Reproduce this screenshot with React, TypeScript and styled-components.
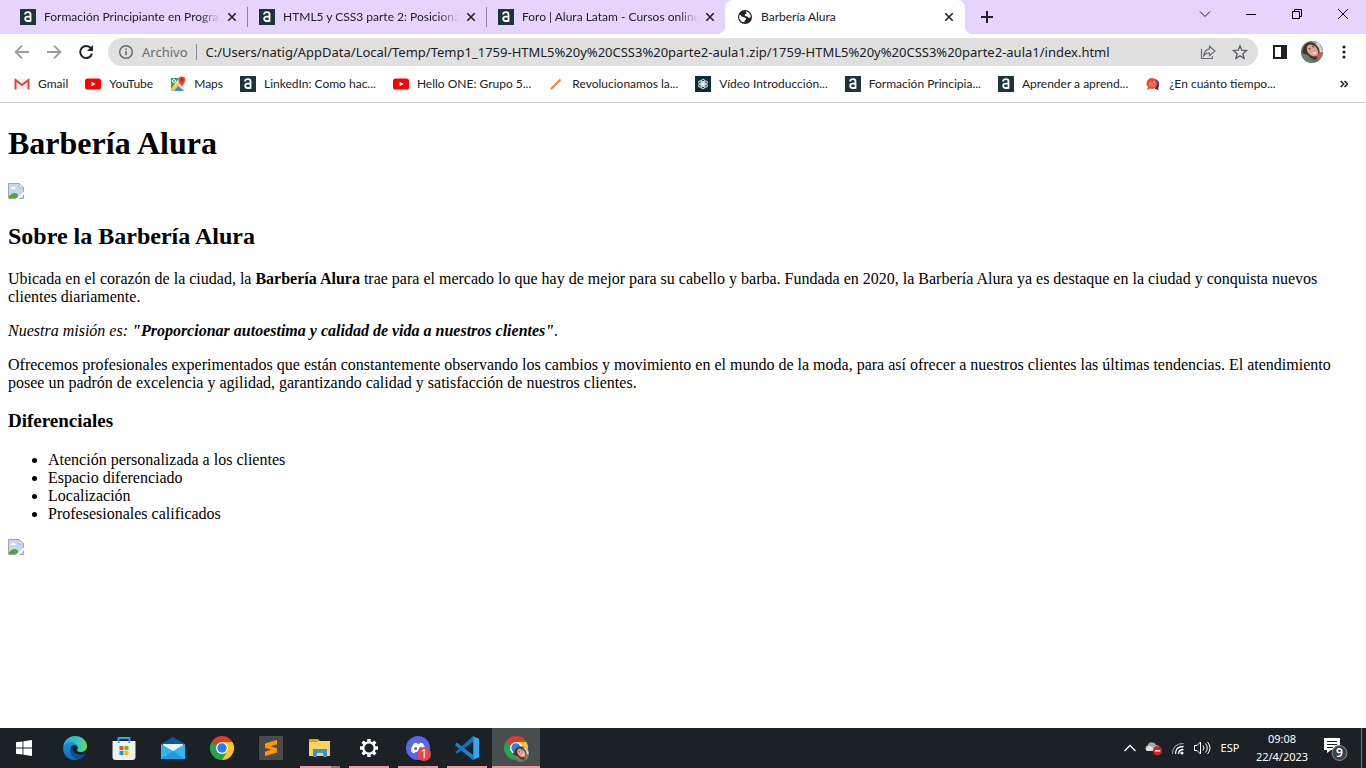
import React from 'react';
import styled, { createGlobalStyle } from 'styled-components';

const uiFont = 'Lato, "Open Sans", sans-serif';
const addressFont = '"Noto Sans", "Open Sans", sans-serif';

const GlobalStyle = createGlobalStyle`
  * { box-sizing: border-box; }
  body { margin: 0; background: #fff; }
  button, input { font: inherit; color: inherit; border: 0; padding: 0; margin: 0; background: none; }
  svg { flex: none; }
`;

const Window = styled.div`
  display: flex;
  flex-direction: column;
  min-height: 100vh;
  background: #fff;
`;

const Chrome = styled.header`
  font-family: ${uiFont};
  color: #202124;
  border-bottom: 1px solid #c9c9c9;
`;

const TabStrip = styled.div`
  display: flex;
  height: 34px;
  padding-left: 8px;
  background: #e7d4fc;
`;

const Tab = styled.div<{ $active?: boolean }>`
  position: relative;
  display: flex;
  align-items: center;
  flex: 0 1 ${p => (p.$active ? 240 : 239)}px;
  min-width: 0;
  padding: 0 ${p => (p.$active ? 8 : 7)}px 0 12px;
  gap: 8px;
  border-radius: 8px 8px 0 0;
  background: ${p => (p.$active ? '#fff' : 'transparent')};

  &::before, &::after {
    content: '';
    position: absolute;
    bottom: 0;
    width: 8px;
    height: 8px;
    display: ${p => (p.$active ? 'block' : 'none')};
  }
  &::before { left: -8px; background: radial-gradient(circle at 0 0, transparent 8px, #fff 8px); }
  &::after { right: -8px; background: radial-gradient(circle at 100% 0, transparent 8px, #fff 8px); }

  button { margin-left: -4px; }
`;

const TabTitle = styled.span<{ $fade?: boolean }>`
  flex: 1;
  overflow: hidden;
  white-space: nowrap;
  font-size: 12px;
  line-height: 16px;
  ${p => p.$fade && 'mask-image: linear-gradient(to right, #000 calc(100% - 20px), transparent);'}
`;

const TabDivider = styled.span`
  width: 1px;
  height: 20px;
  align-self: center;
  margin-right: -1px;
  background: #8d8399;
`;

const IconButton = styled.button<{ $size?: number }>`
  display: flex;
  align-items: center;
  justify-content: center;
  flex: none;
  width: ${p => p.$size ?? 16}px;
  height: ${p => p.$size ?? 16}px;
`;

const NewTab = styled(IconButton)`
  margin: 3px 0 0 8px;
`;

const WindowControls = styled.div`
  display: flex;
  margin-left: auto;
`;

const WindowButton = styled.button`
  display: flex;
  align-items: center;
  justify-content: center;
  width: 46px;
  height: 28px;
`;

const Toolbar = styled.div`
  display: flex;
  align-items: center;
  height: 36px;
  padding: 0 8px;
  gap: 4px;
`;

const AddressBar = styled.div`
  display: flex;
  align-items: center;
  flex: 1;
  height: 28px;
  margin: 0 4px;
  padding: 0 10px;
  gap: 16px;
  border-radius: 14px;
  background: #e0e0e0;
  font-family: ${addressFont};
  font-size: 13px;
`;

const SiteInfo = styled.button`
  display: flex;
  align-items: center;
  gap: 8px;
  height: 16px;
  padding-right: 8px;
  border-right: 1px solid #8b8b8b;
  color: #6a6d71;
`;

const Address = styled.input`
  flex: 1;
  min-width: 0;
  margin-left: -7px;
  outline: none;
`;

const Bookmarks = styled.nav`
  display: flex;
  height: 32px;
  padding: 0 14px 4px;
  align-items: center;
`;

const Bookmark = styled.a`
  display: flex;
  align-items: center;
  gap: 8px;
  flex: none;
  padding-right: 17px;
  color: #202124;
  text-decoration: none;
  white-space: nowrap;
  font-size: 12px;
  line-height: 16px;
`;

const Overflow = styled(IconButton)`
  margin-left: auto;
`;

const Page = styled.main`
  flex: 1;
  padding: 0 8px;
  color: #000;
  font: 16px "Liberation Serif", "Times New Roman", serif;

  h1 { margin: 22px 0 21px; font-size: 32px; }
  h2 { margin: 20px 0; font-size: 24px; }
  h3 { margin: 18px 0 19px; font-size: 19px; }
  p, ul { margin: 16px 0; }
  ul { padding-left: 40px; }
`;

const Taskbar = styled.footer`
  display: flex;
  height: 40px;
  background: #1b2125;
  color: #fff;
  font-family: ${addressFont};
  font-size: 11px;
  line-height: 18px;
`;

const StartButton = styled.button`
  display: flex;
  align-items: center;
  justify-content: center;
  width: 48px;
  margin-right: 3px;
`;

const Apps = styled.div`
  display: flex;
  gap: 1px;
`;

const AppButton = styled.button<{ $running?: boolean; $active?: boolean; $stacked?: boolean }>`
  display: flex;
  flex-direction: column;
  align-items: center;
  width: 48px;
  padding-top: 8px;
  background: ${p => (p.$active ? '#484d50' : 'transparent')};

  &::after {
    content: '';
    width: ${p => (p.$active ? 48 : 40)}px;
    height: 2px;
    margin-top: auto;
    background: ${p =>
      p.$stacked
        ? 'linear-gradient(to right, #f8969f 31px, #a86f76 31px)'
        : p.$running ? '#f8969f' : 'transparent'};
  }
`;

const Tray = styled.div`
  display: flex;
  align-items: center;
  margin-left: auto;
  gap: 8px;
`;

const TrayText = styled.button<{ $wide?: boolean }>`
  width: ${p => (p.$wide ? '64px' : '24px')};
  text-align: center;
  white-space: nowrap;
`;

const TrayEnd = styled.div`
  display: flex;
  align-items: center;
  align-self: stretch;
  gap: 11px;
`;

const ShowDesktop = styled.button`
  align-self: stretch;
  width: 5px;
  border-left: 1px solid #777b7e;
`;

const Alura = () => (
  <svg width="16" height="16" viewBox="0 0 16 16" aria-hidden="true">
    <rect width="16" height="16" fill="#1d343d" />
    <path d="M5.200 5.400V4.600Q5.600 3.200 8 3.200 10.500 3.200 10.500 5.500V12.800" fill="none" stroke="#fff" strokeWidth="1.800" />
    <path d="M10.500 7.600H7.600Q5.200 7.600 5.200 9.800T7.600 12H10.500" fill="none" stroke="#fff" strokeWidth="1.800" />
  </svg>
);

const Globe = () => (
  <svg width="16" height="16" viewBox="0 0 16 16" aria-hidden="true">
    <circle cx="8" cy="8" r="7" fill="#202124" />
    <path d="M3 5.500Q4.500 8 7 8.200q2.200.2 2.200 2.300-1.800.3-1.800 2.700Q3.500 13 2.300 9.500 1.900 7 3 5.500z" fill="#fff" />
    <path d="M8.800 2.300q3.400.5 4.600 3.700l.3 2.200-1.900.8-1.600-1.500-2.200-.6-.3-1.600 1.800-.9z" fill="#fff" />
  </svg>
);

const Close = () => (
  <svg width="16" height="16" viewBox="0 0 16 16" aria-hidden="true">
    <path d="m4.300 4.300 7.400 7.400m0-7.400-7.400 7.400" stroke="#202124" strokeWidth="1.600" />
  </svg>
);

const Arrow = ({ flip = false }: { flip?: boolean }) => (
  <svg width="16" height="16" viewBox="0 0 16 16" aria-hidden="true">
    <path d={flip ? 'M1 8h13.200M8 1.600 14.400 8 8 14.400' : 'M15 8H1.800M8 1.600 1.600 8 8 14.400'} fill="none" stroke="#9a9c9f" strokeWidth="1.800" />
  </svg>
);

const Reload = () => (
  <svg width="16" height="16" viewBox="0 0 16 16" aria-hidden="true">
    <path d="M13 4.400A6 6 0 1 0 14 9.500" fill="none" stroke="#202124" strokeWidth="2" />
    <path d="M15 1v6H9z" fill="#202124" />
  </svg>
);

const Info = () => (
  <svg width="16" height="16" viewBox="0 0 16 16" aria-hidden="true">
    <circle cx="8" cy="8" r="6.300" fill="none" stroke="#5f6368" strokeWidth="1.400" />
    <path d="M8 7v4.300M8 4.400V6" stroke="#5f6368" strokeWidth="1.500" />
  </svg>
);

const Share = () => (
  <svg width="16" height="16" viewBox="0 0 16 16" aria-hidden="true" fill="none" stroke="#6a6d71" strokeWidth="1.200">
    <path d="M1.500 5v9.500h11V12" />
    <path d="M9.500 2.200 15 7l-5.500 4.600V8.900Q6 8.800 3.800 11.600 4.500 5.800 9.500 4.900Z" />
  </svg>
);

const Star = () => (
  <svg width="16" height="16" viewBox="0 0 16 16" aria-hidden="true">
    <path d="m8 1.900 1.800 4.300 4.700.4-3.600 3.100 1.100 4.600L8 11.900l-4 2.400 1.100-4.600-3.600-3.100 4.700-.4Z" fill="none" stroke="#5f6368" strokeWidth="1.400" />
  </svg>
);

const SidePanel = () => (
  <svg width="14" height="14" viewBox="0 0 14 14" aria-hidden="true">
    <path d="M0 0h14v14H0zM2 2v10h6V2z" fill="#202124" fillRule="evenodd" />
  </svg>
);

const Portrait = ({ size = 22 }: { size?: number }) => (
  <svg width={size} height={size} viewBox="0 0 22 22" aria-hidden="true">
    <defs>
      <clipPath id={`face${size}`}><circle cx="11" cy="11" r="11" /></clipPath>
    </defs>
    <g clipPath={`url(#face${size})`}>
      <path d="M0 0h22v22H0z" fill="#5d7065" />
      <path d="M10 0h12v10l-5-3z" fill="#8fa79b" />
      <path d="M15 2h3l4 9-3 1z" fill="#dfd8d2" />
      <path d="M3 5Q7 0 13 2l5 5 1 8-5 4-8-4-5-3z" fill="#4a302b" />
      <ellipse cx="11.500" cy="9.500" rx="4.800" ry="6.800" transform="rotate(-42 11.500 9.500)" fill="#dba48c" />
      <path d="m7.500 7.500 2 .5m1.500-3 2 1.500" stroke="#5b3530" />
      <path d="m11.500 12.500 3.500-2-.6 2.600z" fill="#fff" />
      <path d="m1 12 6 2 6 7-6 2-6-5z" fill="#687c70" />
      <path d="m15 15 4-4 3 2-4 7z" fill="#b2675c" />
    </g>
  </svg>
);

const Gmail = () => (
  <svg width="16" height="16" viewBox="0 0 16 16" aria-hidden="true">
    <path d="M1 3h14v10.500H1z" fill="#f1f1f1" />
    <path d="M1.500 13.500V4L8 9l6.500-5v9.500" fill="none" stroke="#db4437" strokeWidth="1.900" />
  </svg>
);

const YouTube = () => (
  <svg width="16" height="16" viewBox="0 0 16 16" aria-hidden="true">
    <rect y="2.500" width="16" height="11" rx="2.600" fill="#f00" />
    <path d="m6.500 5.700 4.200 2.300-4.200 2.300z" fill="#fff" />
  </svg>
);

const Maps = () => (
  <svg width="16" height="16" viewBox="0 0 16 16" aria-hidden="true">
    <rect x="1" y="2" width="13" height="13" rx="1" fill="#e1e1df" />
    <path d="M1 2h8L1 13z" fill="#34a064" />
    <path d="M1 13 11 4l2 2-9 9H1z" fill="#fbc83d" />
    <path d="m4 15 4-5 6 5z" fill="#4285f4" />
    <circle cx="4" cy="5" r="1.500" fill="none" stroke="#fff" />
    <path d="M8.500 4a3.400 3.400 0 0 1 6.800 0c0 2.500-2.400 3.500-3.400 7-1-3.500-3.400-4.500-3.400-7z" fill="#e34133" />
    <circle cx="11.900" cy="4" r="1.200" fill="#842b25" />
  </svg>
);

const Pencil = () => (
  <svg width="16" height="16" viewBox="0 0 16 16" aria-hidden="true">
    <path d="m3 13 9.500-9.500" stroke="#f47b36" strokeWidth="1.900" />
  </svg>
);

const Atom = () => (
  <svg width="16" height="16" viewBox="0 0 16 16" aria-hidden="true">
    <path d="M0 0h16v16H0z" fill="#082e38" />
    <g fill="none" stroke="#c7d5d7" strokeWidth="1.100">
      <ellipse cx="8" cy="8" rx="4.800" ry="2" transform="rotate(30 8 8)" />
      <ellipse cx="8" cy="8" rx="4.800" ry="2" transform="rotate(90 8 8)" />
      <ellipse cx="8" cy="8" rx="4.800" ry="2" transform="rotate(150 8 8)" />
    </g>
    <circle cx="8" cy="8" r="1.700" fill="#fff" />
  </svg>
);

const Speech = () => (
  <svg width="16" height="16" viewBox="0 0 16 16" aria-hidden="true">
    <path d="M10 3q4 1 4 5 0 3-1 4l1 2-4-1z" fill="#27336c" />
    <path d="M7 2a5.500 5.500 0 1 1-2 10.600L2 14l1-3Q1 9 1.500 6.500 3 2 7 2z" fill="#e94b35" />
    <path d="m4.500 9 1-3 1.500 3L9 5l1 4M4 10h6" fill="none" stroke="#f49a83" strokeWidth=".8" />
  </svg>
);

const BrokenImage = ({ label }: { label: string }) => (
  <svg width="16" height="16" viewBox="0 0 16 16" role="img" aria-label={label}>
    <path d="M.5.500h10.500l4.500 4.500v10.500H.5z" fill="#fff" stroke="#a4a4a4" />
    <path d="M1 1h9.500v4.500H15V15H1z" fill="#c5d7f4" />
    <path d="M11 .5v4.500h4.500z" fill="#fff" stroke="#a4a4a4" />
    <path d="M2.500 6q0-1.500 1.500-1.500Q5 2.500 6.500 4.500 8 4.500 8 6z" fill="#fff" />
    <path d="M1 15v-2Q5.500 8 9.500 11l1.500 4z" fill="#4ea833" />
    <path d="m7.500 16 8.500-7.500v2.700L11 16z" fill="#fff" />
  </svg>
);

const WindowsLogo = () => (
  <svg width="16" height="16" viewBox="0 0 16 16" aria-hidden="true">
    <path d="m0 2.300 6.500-.9v6.100H0zM7.400 1.200 16 0v7.500H7.400zM0 8.400h6.500v6.200l-6.500-.9zM7.400 8.400H16V16l-8.600-1.200z" fill="#fff" />
  </svg>
);

const Edge = () => (
  <svg width="24" height="24" viewBox="0 0 24 24" aria-hidden="true">
    <defs>
      <linearGradient id="edgeTop" x1="0" x2="1"><stop stopColor="#27a7e5" /><stop offset=".6" stopColor="#31c5c6" /><stop offset="1" stopColor="#6bdd59" /></linearGradient>
      <linearGradient id="edgeLow" x2="0" y2="1"><stop stopColor="#1794dc" /><stop offset="1" stopColor="#1266b8" /></linearGradient>
    </defs>
    <path d="M.3 10.500C1 4.500 5.700 0 12 0c7 0 12 5 12 10 0 4-3 6-6.500 6-3 0-4-1.200-3.300-2.200 1.600-2.200.3-5.800-4.200-5.800C6 8 1.500 9.700.3 10.500z" fill="url(#edgeTop)" />
    <path d="M.1 12C.5 8 4.500 6 8 6c4.500 0 7 3 6.600 6-.4-2-2-3-3.600-3-3 0-4 3.500-3 7 1 4 4.500 7 7.500 7.500C6 26 0 19 .1 12z" fill="url(#edgeLow)" />
    <path d="M9 11c-3 4-.5 12 6.500 12.500 3-.8 5.500-2.600 7-5.200.3-.5-.2-.8-.7-.5C17 20 9.500 18 9 11z" fill="#124d8d" />
  </svg>
);

const Store = () => (
  <svg width="24" height="24" viewBox="0 0 24 24" aria-hidden="true">
    <path d="M6.500 7V2h11v5" fill="none" stroke="#29a9ea" strokeWidth="1.800" />
    <path d="M.5 5h23v16a3 3 0 0 1-3 3h-17a3 3 0 0 1-3-3z" fill="#f0f0f0" />
    <path d="M6 5h1.500v2H6zm10.500 0h1.500v2h-1.500z" fill="#219ddd" />
    <path d="M7.500 10h4v4h-4z" fill="#f25022" /><path d="M12.500 10h4v4h-4z" fill="#7fba00" />
    <path d="M7.500 15h4v4h-4z" fill="#00a4ef" /><path d="M12.500 15h4v4h-4z" fill="#ffb900" />
  </svg>
);

const Mail = () => (
  <svg width="24" height="24" viewBox="0 0 24 24" aria-hidden="true">
    <path d="m0 8 12-7 12 7v8H0z" fill="#075aa7" />
    <path d="M2 8h20v6l-10 2L2 14z" fill="#f2f2f2" />
    <path d="m0 8 12 7 12-7v15H0z" fill="#32b4ed" />
    <path d="m12 15 12 8H0z" fill="#1f9ae2" />
  </svg>
);

const ChromeMark = () => (
  <>
    <path d="M12 12 1.600 6A12 12 0 0 1 22.400 6z" fill="#e6392e" />
    <path d="M12 12 1.600 6A12 12 0 0 0 12 24l5.200-9z" fill="#27a44b" />
    <path d="M12 6h10.400A12 12 0 0 1 12 24l5.200-9z" fill="#fdc921" />
    <circle cx="12" cy="12" r="6" fill="#fff" />
    <circle cx="12" cy="12" r="4.700" fill="#327bea" />
  </>
);

const ChromeIcon = () => <svg width="24" height="24" viewBox="0 0 24 24" aria-hidden="true"><ChromeMark /></svg>;

const Sublime = () => (
  <svg width="24" height="24" viewBox="0 0 24 24" aria-hidden="true">
    <rect width="24" height="24" rx="1" fill="#4b4b4b" />
    <path d="M18 4v4.200l-6.300 2 6.300 2v4.300L6 20v-4.200l6.300-2-6.300-2V7.500z" fill="#ff9800" />
  </svg>
);

const Folder = () => (
  <svg width="24" height="24" viewBox="0 0 24 24" aria-hidden="true">
    <path d="M1 3h9l2 2h10v15H1z" fill="#e3a007" />
    <path d="M1 6h8l2-1h11v15H1z" fill="#ffd35b" />
    <path d="M5 13h14v8h-4v-4H9v4H5z" fill="#3c91d1" />
  </svg>
);

const Gear = () => (
  <svg width="24" height="24" viewBox="0 0 24 24" aria-hidden="true">
    <circle cx="12" cy="12" r="5.700" fill="none" stroke="#fff" strokeWidth="2.200" />
    {[0, 45, 90, 135, 180, 225, 270, 315].map(a => (
      <path key={a} d="M10.300 6V3h3.400v3z" fill="#fff" transform={`rotate(${a} 12 12)`} />
    ))}
  </svg>
);

const Discord = () => (
  <svg width="26" height="26" viewBox="0 0 26 26" aria-hidden="true">
    <circle cx="13" cy="12" r="12" fill="#5865f2" />
    <path d="m8.500 7.500 3-.9.700 1.100h2.300l.7-1.100 3 .9q2.400 4 2.300 8-1.700 1.500-3.500 1.800l-1-1.500H10.500l-1 1.500Q7.500 17 6 15.500q0-4 2.500-8z" fill="#fff" />
    <circle cx="10.600" cy="12.400" r="1.500" fill="#5865f2" /><circle cx="15.600" cy="12.400" r="1.500" fill="#5865f2" />
    <circle cx="19" cy="18" r="7" fill="#e94649" />
    <text x="19" y="22" textAnchor="middle" fill="#fff" fontSize="12">1</text>
  </svg>
);

const VSCode = () => (
  <svg width="24" height="24" viewBox="0 0 24 24" aria-hidden="true">
    <path d="m.4 8 1.500-1.300 16.600 12.500L18 24 .4 9.400z" fill="#1784ca" />
    <path d="M.4 16 18 0l.5 5.500L2 17.400z" fill="#0b75bd" />
    <path d="m17.500 0 6.500 2.800v18.400L17.500 24q.8-.3.800-1.500v-21Q18.300.3 17.500 0z" fill="#30a9f2" />
  </svg>
);

const ChromeProfile = () => (
  <svg width="26" height="26" viewBox="-1 0 26 26" aria-hidden="true">
    <ChromeMark />
    <svg x="9" y="10" width="16" height="16"><Portrait size={16} /></svg>
  </svg>
);

const CloudOff = () => (
  <svg width="18" height="16" viewBox="0 0 18 16" aria-hidden="true">
    <path d="M2 11a3 3 0 0 1 .5-5.500Q4 1.500 8 2.500q2 .4 3 2.500 3 .1 4 3v3z" fill="#a5a7a9" />
    <path d="M1 9q1-4 5-3l5 5H3q-2 0-2-2z" fill="#e1e1e1" />
    <circle cx="12.500" cy="10.800" r="4.600" fill="#d81d28" />
    <path d="M9.800 10.800h5.400" stroke="#fff" strokeWidth="1.400" />
  </svg>
);

const Wifi = () => (
  <svg width="16" height="16" viewBox="0 0 16 16" aria-hidden="true" fill="none" stroke="#fff">
    <path d="M2.500 14Q2.500 3.500 13.500 3.500" stroke="#afb1b2" />
    <path d="M5.500 14q0-7.500 8-7.500M8.500 14q0-4.500 5-4.500" strokeWidth="1.300" />
    <circle cx="12" cy="13" r="1.600" fill="#fff" stroke="none" />
  </svg>
);

const Speaker = () => (
  <svg width="18" height="16" viewBox="0 0 18 16" aria-hidden="true" fill="none" stroke="#fff">
    <path d="M1.500 5.500H4L7.500 2v12L4 10.500H1.500zM10 5.500q2 2.500 0 5M12.500 3.500q3.500 4.500 0 9M14.500 2q5 6 0 12" />
  </svg>
);

const Notifications = () => (
  <svg width="26" height="26" viewBox="0 0 26 26" aria-hidden="true">
    <path d="M1 3h16v12H8l-4 3v-3H1z" fill="#fff" />
    <path d="M4 6.500h10M4 9.500h10M4 12.500h6" stroke="#1b2125" />
    <circle cx="16.500" cy="18" r="7.500" fill="#3d4245" stroke="#85898b" />
    <text x="16.500" y="22" textAnchor="middle" fill="#fff" fontSize="12" fontWeight="600">9</text>
  </svg>
);

const tabs = [
  { title: 'Formación Principiante en Programación', divider: true },
  { title: 'HTML5 y CSS3 parte 2: Posicionamiento', divider: true },
  { title: 'Foro | Alura Latam - Cursos online de', divider: false },
];

const bookmarks = [
  { label: 'Gmail', icon: <Gmail /> },
  { label: 'YouTube', icon: <YouTube /> },
  { label: 'Maps', icon: <Maps /> },
  { label: 'LinkedIn: Como hac...', icon: <Alura /> },
  { label: 'Hello ONE: Grupo 5...', icon: <YouTube /> },
  { label: 'Revolucionamos la...', icon: <Pencil /> },
  { label: 'Vídeo Introducción...', icon: <Atom /> },
  { label: 'Formación Principia...', icon: <Alura /> },
  { label: 'Aprender a aprend...', icon: <Alura /> },
  { label: '¿En cuánto tiempo...', icon: <Speech /> },
];

const apps = [
  { name: 'Edge', icon: <Edge /> },
  { name: 'Store', icon: <Store /> },
  { name: 'Correo', icon: <Mail /> },
  { name: 'Chrome', icon: <ChromeIcon /> },
  { name: 'Sublime Text', icon: <Sublime /> },
  { name: 'Explorador', icon: <Folder />, running: true, stacked: true },
  { name: 'Configuración', icon: <Gear />, running: true },
  { name: 'Discord', icon: <Discord />, running: true },
  { name: 'Visual Studio Code', icon: <VSCode />, running: true },
  { name: 'Chrome, Barbería Alura', icon: <ChromeProfile />, running: true, active: true },
];

export default function App() {
  return (
    <Window>
      <GlobalStyle />
      <Chrome>
        <TabStrip>
          {tabs.map(tab => (
            <React.Fragment key={tab.title}>
              <Tab>
                <Alura />
                <TabTitle $fade>{tab.title}</TabTitle>
                <IconButton aria-label="Cerrar"><Close /></IconButton>
              </Tab>
              {tab.divider && <TabDivider />}
            </React.Fragment>
          ))}
          <Tab $active>
            <Globe />
            <TabTitle>Barbería Alura</TabTitle>
            <IconButton aria-label="Cerrar"><Close /></IconButton>
          </Tab>
          <NewTab $size={28} aria-label="Nueva pestaña">
            <svg width="14" height="14" viewBox="0 0 14 14"><path d="M7 1v12M1 7h12" stroke="#202124" strokeWidth="2" /></svg>
          </NewTab>
          <WindowControls>
            <WindowButton aria-label="Buscar pestañas">
              <svg width="12" height="12" viewBox="0 0 12 12"><path d="m1 3.500 5 5 5-5" fill="none" stroke="#202124" /></svg>
            </WindowButton>
            <WindowButton aria-label="Minimizar">
              <svg width="10" height="10" viewBox="0 0 10 10"><path d="M0 5.500h10" stroke="#000" /></svg>
            </WindowButton>
            <WindowButton aria-label="Restaurar">
              <svg width="10" height="10" viewBox="0 0 10 10"><path d="M.5 2.500h7v7h-7zM2.500 2.500v-2h7v7h-2" fill="none" stroke="#000" /></svg>
            </WindowButton>
            <WindowButton aria-label="Cerrar ventana">
              <svg width="10" height="10" viewBox="0 0 10 10"><path d="m0 0 10 10M10 0 0 10" stroke="#000" /></svg>
            </WindowButton>
          </WindowControls>
        </TabStrip>

        <Toolbar>
          <IconButton $size={28} aria-label="Atrás"><Arrow /></IconButton>
          <IconButton $size={28} aria-label="Adelante"><Arrow flip /></IconButton>
          <IconButton $size={28} aria-label="Recargar"><Reload /></IconButton>
          <AddressBar>
            <SiteInfo><Info />Archivo</SiteInfo>
            <Address
              aria-label="Dirección"
              defaultValue="C:/Users/natig/AppData/Local/Temp/Temp1_1759-HTML5%20y%20CSS3%20parte2-aula1.zip/1759-HTML5%20y%20CSS3%20parte2-aula1/index.html"
            />
            <IconButton aria-label="Compartir"><Share /></IconButton>
            <IconButton aria-label="Favorito"><Star /></IconButton>
          </AddressBar>
          <IconButton $size={28} aria-label="Panel lateral"><SidePanel /></IconButton>
          <IconButton $size={28} aria-label="Perfil"><Portrait /></IconButton>
          <IconButton $size={28} aria-label="Menú">
            <svg width="4" height="14" viewBox="0 0 4 14" fill="#202124"><circle cx="2" cy="2" r="1.600" /><circle cx="2" cy="7" r="1.600" /><circle cx="2" cy="12" r="1.600" /></svg>
          </IconButton>
        </Toolbar>

        <Bookmarks>
          {bookmarks.map(b => (
            <Bookmark key={b.label} href="#">{b.icon}{b.label}</Bookmark>
          ))}
          <Overflow aria-label="Más marcadores">
            <svg width="8" height="8" viewBox="0 0 8 8"><path d="m.7 1 3 3-3 3M4.500 1l3 3-3 3" fill="none" stroke="#202124" strokeWidth="1.600" /></svg>
          </Overflow>
        </Bookmarks>
      </Chrome>

      <Page>
        <h1>Barbería Alura</h1>
        <BrokenImage label="Banner" />
        <h2>Sobre la Barbería Alura</h2>
        <p>
          Ubicada en el corazón de la ciudad, la <strong>Barbería Alura</strong> trae para el mercado lo que hay de mejor para su
          cabello y barba. Fundada en 2020, la Barbería Alura ya es destaque en la ciudad y conquista nuevos clientes diariamente.
        </p>
        <p>
          <em>Nuestra misión es: <strong>"Proporcionar autoestima y calidad de vida a nuestros clientes"</strong>.</em>
        </p>
        <p>
          Ofrecemos profesionales experimentados que están constantemente observando los cambios y movimiento en el mundo de la
          moda, para así ofrecer a nuestros clientes las últimas tendencias. El atendimiento posee un padrón de excelencia y
          agilidad, garantizando calidad y satisfacción de nuestros clientes.
        </p>
        <h3>Diferenciales</h3>
        <ul>
          <li>Atención personalizada a los clientes</li>
          <li>Espacio diferenciado</li>
          <li>Localización</li>
          <li>Profesesionales calificados</li>
        </ul>
        <BrokenImage label="Diferenciales" />
      </Page>

      <Taskbar>
        <StartButton aria-label="Inicio"><WindowsLogo /></StartButton>
        <Apps>
          {apps.map(a => (
            <AppButton key={a.name} aria-label={a.name} $running={a.running} $active={a.active} $stacked={a.stacked}>{a.icon}</AppButton>
          ))}
        </Apps>
        <Tray>
          <IconButton aria-label="Iconos ocultos">
            <svg width="12" height="8" viewBox="0 0 12 8"><path d="m.5 7 5.500-5.500L11.500 7" fill="none" stroke="#fff" strokeWidth="1.300" /></svg>
          </IconButton>
          <IconButton aria-label="OneDrive"><CloudOff /></IconButton>
          <IconButton aria-label="Red"><Wifi /></IconButton>
          <IconButton aria-label="Volumen"><Speaker /></IconButton>
          <TrayText>ESP</TrayText>
          <TrayText $wide>09:08<br />22/4/2023</TrayText>
          <TrayEnd>
            <IconButton $size={28} aria-label="Notificaciones"><Notifications /></IconButton>
            <ShowDesktop aria-label="Mostrar escritorio" />
          </TrayEnd>
        </Tray>
      </Taskbar>
    </Window>
  );
}
